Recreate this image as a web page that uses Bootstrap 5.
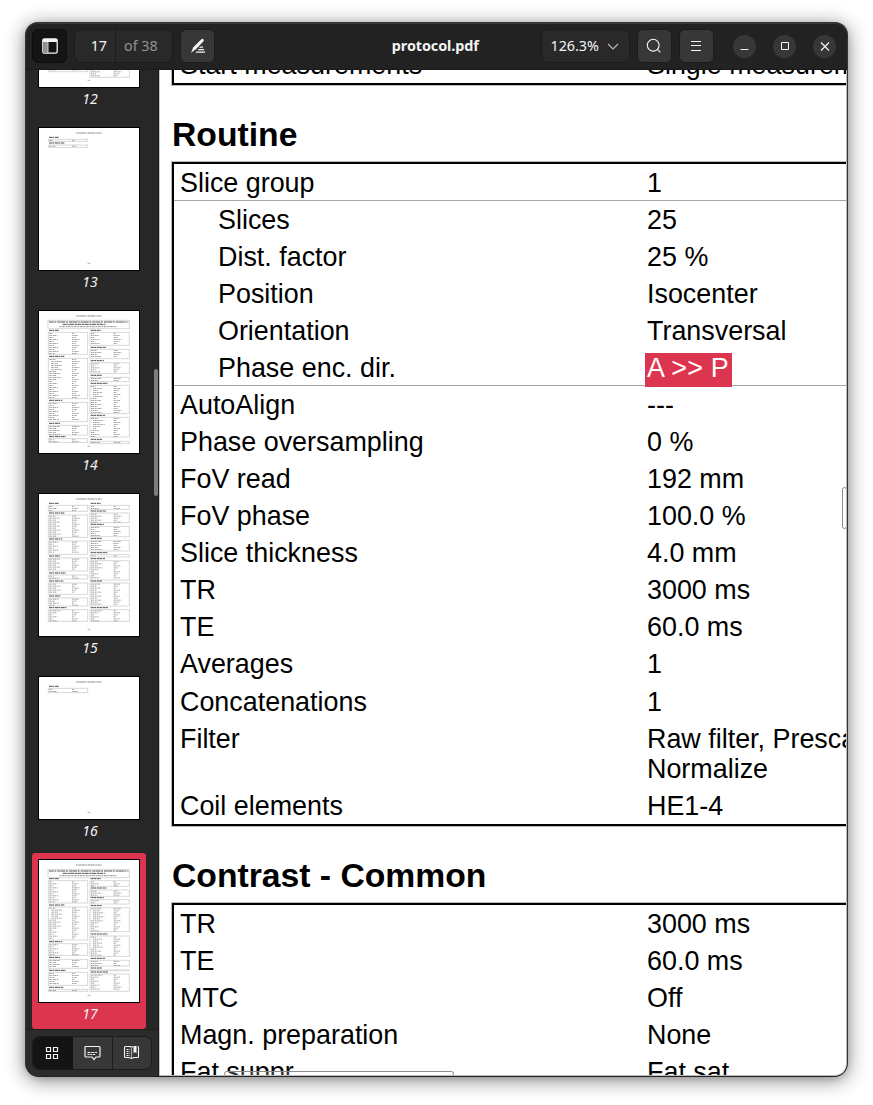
<!DOCTYPE html>
<html lang="en">
<head>
<meta charset="utf-8">
<title>protocol.pdf</title>
<link href="https://cdn.jsdelivr.net/npm/bootstrap@5.3.0/dist/css/bootstrap.min.css" rel="stylesheet">
<style>
  body { background:#fff; height:1105px; overflow:hidden; font-family:"Noto Sans","Open Sans",sans-serif; }
  .viewer { width:823px; height:1055px; margin:22px 0 0 25px; border:1px solid #343434; border-bottom-color:#222; border-radius:13px 13px 14px 14px;
    background:#272727; box-shadow:0 3px 20px rgba(0,0,0,.48), 0 2px 6px rgba(0,0,0,.12); }
  .topbar { height:47px; background:#222; border-top:1px solid #393939; border-bottom:1px solid #1a1a1a; padding:0 11.5px 1px 6px; color:#f4f4f4; font-size:14.3px; border-radius:12px 12px 0 0; }
  .tool { width:35px; height:34px; border:1px solid #1b1b1b; border-radius:6px; background:#373737; color:#f4f4f4; padding:0; display:flex; align-items:center; justify-content:center; flex:none; }
  .tool.pressed { background:#141414; border-color:#0d0d0d; }
  .pagebox { width:99px; height:34px; border:1px solid #1b1b1b; border-radius:7px; background:#292929; }
  .pagebox .current { width:41px; border-right:1px solid #1b1b1b; padding-right:8px; line-height:32px; }
  .pagebox .total { color:#929292; line-height:32px; padding-left:8px; }
  .zoombox { width:89px; height:34px; border:1px solid #1b1b1b; border-radius:7px; background:#292929; padding:0 10px 0 9px; }
  .round { width:23px; height:23px; border-radius:50%; background:#373737; }
  .doctitle { font-size:14.4px; letter-spacing:-.1px; line-height:20px; padding-left:19px; }
  .sidepane { width:133px; background:#272727; border-right:1px solid #1b1b1b; }
  .thumbs { height:959px; overflow:hidden; position:relative; }
  .thumblist { margin-top:-132px; }
  .thumb { width:114px; height:176px; margin:0 0 7px 6px; padding-top:6px; border-radius:3px; color:#f4f4f4; font-size:14px; font-style:italic; line-height:22px; text-align:center; flex:none; }
  .thumb span { padding-left:2px; }
  .thumb.selected { background:#dc3550; }
  .thumb svg { display:block; margin:0 auto; }
  .sidescroll { position:absolute; right:0; top:299px; width:4px; height:127px; border-radius:3px; background:#7d7d7d; }
  .modes { height:47px; background:#2c2c2c; border-top:1px solid #1e1e1e; padding:6px 0 0 6px; flex:none; }
  .modes .btn-group { width:120px; height:34px; border:1px solid #1b1b1b; border-radius:7px; overflow:hidden; background:#373737; }
  .modes .btn { flex:1 1 0; padding:0; border:0; border-radius:0; color:#f4f4f4; display:flex; align-items:center; justify-content:center; margin:0!important; }
  .modes .btn + .btn + .btn { border-left:1px solid #1b1b1b; }
  .modes .btn.active { background:#141414; color:#f4f4f4; padding-right:2px; }
  .paper { background:#fff; border-left:1px solid #c6c6c6; border-right:1px solid #bbb; border-bottom:1px solid #bbb; color:#000; overflow:hidden; position:relative; font:26.9px/30px "Liberation Sans",Arial,sans-serif; border-bottom-right-radius:12px; padding-left:12px; }
  .sheet { margin-top:-26.5px; width:900px; }
  .sheet h2 { font-size:33.7px; font-weight:700; line-height:38px; height:77.3px; margin:0; padding:30.4px 0 0 0; }
  .params { border:2px solid #000; box-shadow:0 0 0 1px #bbb; }
  .param { display:flex; min-height:37.06px; padding:4px 0 3px 6px; }
  .param > div:first-child { width:467px; flex:none; }
  .param.child > div:first-child { padding-left:38px; }
  .param.ruled { border-bottom:1px solid #a4a4a4; padding-bottom:2px; }
  .picked { background:#dc3550; color:#fff; display:block; height:34px; line-height:30px; margin:0 -2px -4px -2px; padding:0 3px 0 2px; position:relative; letter-spacing:.2px; }
  .vscroll { position:absolute; right:-1px; top:417px; width:5px; height:42px; border:1px solid #8b8b8b; border-radius:3px; background:#fff; }
  .hscroll { position:absolute; left:64px; bottom:-1px; width:230px; height:5px; border:1px solid #8b8b8b; border-radius:3px; background:rgba(255,255,255,.2); }
</style>
</head>
<body>
<div class="viewer d-flex flex-column overflow-hidden">
  <header class="topbar d-flex align-items-center flex-shrink-0">
    <button class="tool pressed"><svg width="16" height="16" viewBox="0 0 16 16"><rect x=".8" y=".8" width="14.4" height="14.4" rx="1.8" fill="none" stroke="currentColor" stroke-width="1.3"/><path d="M1 1h14v3H1z" fill="currentColor"/><path d="M1.4 4h4v11h-4z" fill="#929292"/><path d="M5.9 4v11" stroke="currentColor"/></svg></button>
    <div class="pagebox d-flex" style="margin-left:7px"><div class="current text-end">17</div><div class="total">of 38</div></div>
    <button class="tool" style="margin-left:7px"><svg width="16" height="16" viewBox="0 0 16 16" fill="currentColor"><path d="M11.4 1.3q1-.9 1.900 0t.2 2L6.200 11 1 14.800 3.300 9.200zM10.200 8.500H13v1.200H9zM8.800 11H14v1.200H7.600zM6.500 13.500H15v1.200H5.400z"/></svg></button>
    <div class="doctitle fw-bold text-center flex-grow-1"><span class="ps-5 ms-5">protocol.pdf</span></div>
    <div class="d-flex align-items-center">
      <div class="zoombox d-flex align-items-center justify-content-between"><span>126.3%</span><svg width="12" height="7" viewBox="0 0 12 7"><path d="M1 1l5 5 5-5" fill="none" stroke="#b8b8b8" stroke-width="1.1"/></svg></div>
      <button class="tool" style="margin-left:7px"><svg width="16" height="16" viewBox="0 0 16 16" fill="none" stroke="currentColor" stroke-width="1.1"><circle cx="7.2" cy="7.2" r="5.9"/><path d="M11.4 11.4l3 3"/></svg></button>
      <button class="tool" style="margin-left:7px"><svg width="16" height="16" viewBox="0 0 16 16" stroke="currentColor"><path d="M3 3.5h10M3 7.5h10M3 12.5h10"/></svg></button>
      <div class="d-flex" style="gap:17px;margin-left:19px">
        <span class="round"><svg class="d-block" width="23" height="23" stroke="#f4f4f4"><path d="M7.5 14.5h8"/></svg></span>
        <span class="round"><svg class="d-block" width="23" height="23" stroke="#f4f4f4" fill="none"><path d="M8.5 7.5h7v7h-7z"/></svg></span>
        <span class="round"><svg class="d-block" width="23" height="23" stroke="#f4f4f4" stroke-width="1.2"><path d="M8 7.5l8 8M16 7.5l-8 8"/></svg></span>
      </div>
    </div>
  </header>
  <div class="d-flex flex-grow-1 overflow-hidden">
    <aside class="sidepane flex-shrink-0 d-flex flex-column">
      <div class="thumbs flex-shrink-0"><div class="thumblist d-flex flex-column" id="thumbs"></div><div class="sidescroll"></div></div>
      <div class="modes"><div class="btn-group">
        <button class="btn active"><svg width="14" height="14" fill="none" stroke="currentColor" stroke-width="1.2"><path d="M1.5 1.5h4v4h-4zM8.5 1.5h4v4h-4zM1.5 8.5h4v4h-4zM8.5 8.5h4v4h-4z"/></svg></button>
        <button class="btn"><svg width="17" height="16" viewBox="0 0 17 16" fill="none" stroke="currentColor" stroke-width="1.2"><path d="M2 1.5h13q1 0 1 1v8.500q0 1-1 1h-3l-2 2.500-2-2.500H2q-1 0-1-1V2.500q0-1 1-1z"/><path d="M3.500 7.500H13" stroke-dasharray="3 .8"/><path d="M3.500 9.500h8" stroke-dasharray="2 .8"/></svg></button>
        <button class="btn"><svg width="17" height="16" viewBox="0 0 17 16" fill="none" stroke="currentColor" stroke-width="1.1"><path d="M10 1.500Q8.500 2.500 7 1.500H2.500q-1 0-1 1v9q0 1 1 1H6l2.500 1 2.500-1h3.500q1 0 1-1v-9q0-1-1-1"/><path d="M3.500 4.500h3M3.500 6.500h3M3.500 8.500h3M3.500 10.500h3" stroke-dasharray="2 .5"/><path d="M8.500 3v10" stroke-opacity=".6"/><path d="M10.500 1h3v7.500L12 7l-1.500 1.500z" fill="currentColor" stroke="none"/></svg></button>
      </div></div>
    </aside>
    <main class="paper flex-grow-1">
      <div class="sheet">
        <section class="params"><div class="param"><div>Start measurements</div><div>Single measurement</div></div></section>
        <h2>Routine</h2>
        <section class="params">
          <div class="param ruled"><div>Slice group</div><div>1</div></div>
          <div class="param child"><div>Slices</div><div>25</div></div>
          <div class="param child"><div>Dist. factor</div><div>25 %</div></div>
          <div class="param child"><div>Position</div><div>Isocenter</div></div>
          <div class="param child"><div>Orientation</div><div>Transversal</div></div>
          <div class="param child ruled"><div>Phase enc. dir.</div><div><span class="picked">A &gt;&gt; P</span></div></div>
          <div class="param"><div>AutoAlign</div><div>---</div></div>
          <div class="param"><div>Phase oversampling</div><div>0 %</div></div>
          <div class="param"><div>FoV read</div><div>192 mm</div></div>
          <div class="param"><div>FoV phase</div><div>100.0 %</div></div>
          <div class="param"><div>Slice thickness</div><div>4.0 mm</div></div>
          <div class="param"><div>TR</div><div>3000 ms</div></div>
          <div class="param"><div>TE</div><div>60.0 ms</div></div>
          <div class="param"><div>Averages</div><div>1</div></div>
          <div class="param"><div>Concatenations</div><div>1</div></div>
          <div class="param"><div>Filter</div><div>Raw filter, Prescan<br>Normalize</div></div>
          <div class="param"><div>Coil elements</div><div>HE1-4</div></div>
        </section>
        <h2>Contrast - Common</h2>
        <section class="params">
          <div class="param"><div>TR</div><div>3000 ms</div></div>
          <div class="param"><div>TE</div><div>60.0 ms</div></div>
          <div class="param"><div>MTC</div><div>Off</div></div>
          <div class="param"><div>Magn. preparation</div><div>None</div></div>
          <div class="param"><div>Fat suppr.</div><div>Fat sat.</div></div>
        </section>
      </div>
      <div class="vscroll"></div>
      <div class="hscroll"></div>
    </main>
  </div>
</div>
<script>
  // Miniature pages: vertical extents of the parameter tables in each of the two columns
  const pages = [
    { n: 12, left: [[67,200],[212,383]], right: [[67,260],[272,400]] },
    { n: 13, left: [[37,43],[54,61]], right: [] },
    { n: 14, banner: true, left: [[67,133],[145,266],[277,335],[346,375],[386,397]], right: [[67,106],[118,146],[158,191],[202,215],[226,311],[322,381],[394,401]] },
    { n: 15, left: [[37,55],[66,133],[144,184],[195,234],[246,258],[270,304],[315,339],[350,385]], right: [[37,49],[60,89],[100,131],[142,174],[185,192],[203,261],[270,339],[350,385]] },
    { n: 16, left: [[37,50]], right: [] },
    { n: 17, banner: true, left: [[65,132],[144,243],[254,289],[301,328],[340,379],[391,397]], right: [[65,82],[93,112],[122,135],[146,218],[231,292],[304,321],[333,335],[345,397]] }
  ];
  const dash = (x, y, w, color, thick, pattern) =>
    `<path d="M${x} ${y}h${w}" stroke="${color}" stroke-width="${thick}" stroke-dasharray="${pattern}"/>`;
  function column(x, boxes, nestedBoxes) {
    let s = '';
    boxes.forEach(([top, bottom], b) => {
      s += dash(x + 2, top - 6, 30 + (b * 17) % 24, '#444', 2.8, '9 1 6 2');
      s += `<rect x="${x}" y="${top}" width="118" height="${bottom - top}" fill="none" stroke="#d8d8d8" stroke-width="3"/>`;
      for (let y = top + 3.5, i = 0; y < bottom - 1; y += 6, i++) {
        const nested = nestedBoxes.includes(b) && i > 0 && i < 6;
        s += dash(x + (nested ? 9 : 3), y, 11 + (i * 13 + b * 7) % 25, '#8c8c8c', 2.4, '5 1 3 2');
        s += dash(x + 71, y, 7 + (i * 11 + b * 5) % 17, '#8c8c8c', 2.4, '4 1 2 1');
      }
    });
    return s;
  }
  document.getElementById('thumbs').innerHTML = pages.map(p => {
    let s = dash(114, 18, 77, '#777', 2.6, '5 2 8 1 11 2');
    if (p.banner) s += '<rect x="30" y="31" width="244" height="25" fill="none" stroke="#d8d8d8" stroke-width="3"/>'
      + dash(33, 36, 238, '#444', 2.8, '14 2 6 3 9 1') + dash(74, 43, 128, '#444', 2.8, '12 2 7 1') + dash(64, 50, 172, '#777', 2.4, '5 2 9 2');
    s += column(31, p.left, p.banner ? [1] : []) + column(156, p.right, p.n === 14 ? [4, 5] : p.n === 17 ? [3, 4] : []) + dash(149, 409, 7, '#8c8c8c', 2.6, '3 1');
    return `<div class="thumb ${p.n === 17 ? 'selected' : ''}"><svg width="102" height="144" viewBox="0 0 306 432"><rect x="1.500" y="1.500" width="303" height="429" fill="#fff" stroke="#000" stroke-width="3"/>${s}</svg><span>${p.n}</span></div>`;
  }).join('');
</script>
<script src="https://cdn.jsdelivr.net/npm/bootstrap@5.3.0/dist/js/bootstrap.bundle.min.js"></script>
</body>
</html>
